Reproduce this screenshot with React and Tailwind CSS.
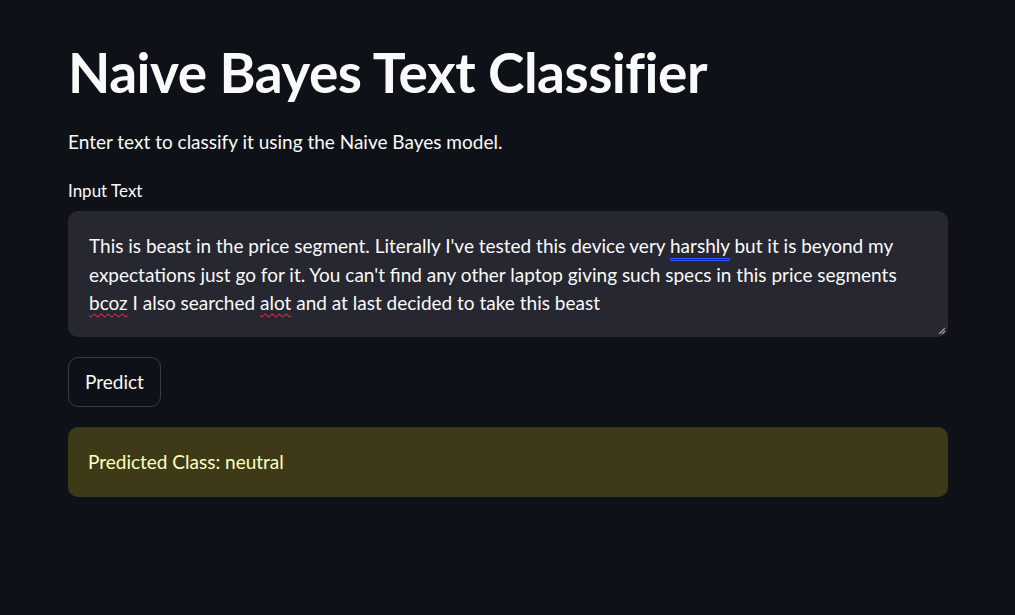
import React from 'react';

// Streamlit-like dark page: title, caption, text area, button, result alert
const FONT = { fontFamily: 'Lato, "Noto Sans", sans-serif' };

function Misspelled({ children }) {
  return (
    <span className="underline decoration-wavy decoration-[#ff3b3b] decoration-1 underline-offset-[3px]">
      {children}
    </span>
  );
}

function Grammar({ children }) {
  return (
    <span className="border-b-[3px] border-double border-[#3358ff] pb-[1px]">
      {children}
    </span>
  );
}

export default function App() {
  return (
    <div className="min-h-[615px] w-full bg-[#0e1117] text-[#fafafa]" style={FONT}>
      <div className="w-[880px] ml-[68px] pt-[39px] flex flex-col">
        <h1 className="text-[55px] leading-[66px] font-bold tracking-[-0.5px]">
          Naive Bayes Text Classifier
        </h1>
        <p className="mt-[23px] text-[19px] leading-[28px]">
          Enter text to classify it using the Naive Bayes model.
        </p>
        <label className="mt-[24px] text-[17px] leading-[22px]">Input Text</label>
        <div className="relative mt-[9px] h-[126px] rounded-[10px] bg-[#262730] px-[21px] pt-[21px] text-[19px] leading-[28.5px] whitespace-nowrap">
          This is beast in the price segment. Literally I've tested this device very <Grammar>harshly</Grammar> but it is beyond my
          <br />
          expectations just go for it. You can't find any other laptop giving such specs in this price segments
          <br />
          <Misspelled>bcoz</Misspelled> I also searched <Misspelled>alot</Misspelled> and at last decided to take this beast
          <svg className="absolute right-[2px] bottom-[2px]" width="8" height="8" viewBox="0 0 8 8">
            <path d="M7 1 L1 7 M7 4 L4 7" stroke="#9a9aa2" strokeWidth="1.2" />
          </svg>
        </div>
        <div className="mt-[20px]">
          <button className="h-[50px] px-[16px] rounded-[10px] border border-[#3a3d45] bg-[#0e1117] text-[19px] text-[#fafafa]">
            Predict
          </button>
        </div>
        <div className="mt-[20px] h-[70px] rounded-[10px] bg-[#3e3a17] px-[20px] flex items-center text-[19px] text-[#ffffc2]">
          Predicted Class: neutral
        </div>
      </div>
    </div>
  );
}
